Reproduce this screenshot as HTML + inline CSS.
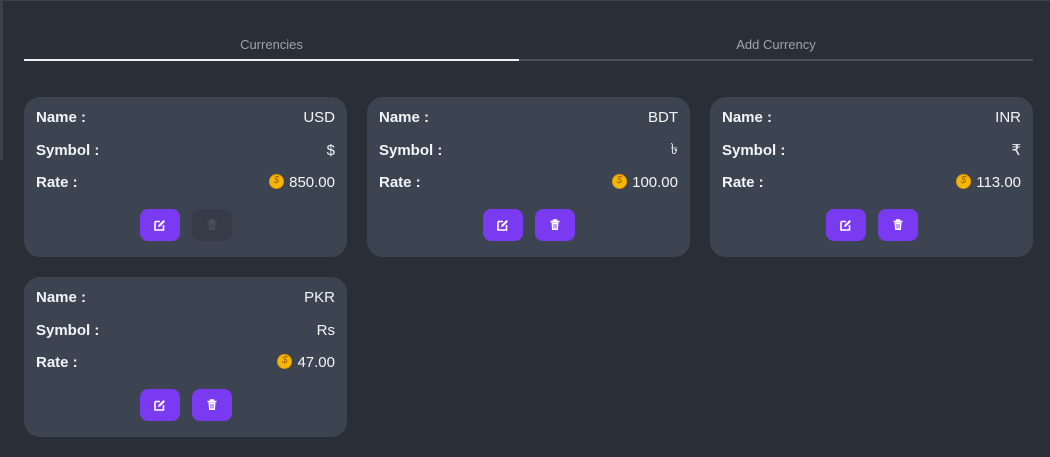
<!DOCTYPE html>
<html><head><style>
*{box-sizing:border-box;margin:0;padding:0}
body{width:1050px;height:457px;background:#2a2e37;font-family:"Liberation Sans",sans-serif;position:relative;overflow:hidden}
.edge{position:absolute;left:0;top:0;width:3px;height:160px;background:#3b404c}
.topedge{position:absolute;left:0;top:0;width:1050px;height:1px;background:#3b404c}
.tab{position:absolute;top:37px;font-size:13px;color:#9ca3af;text-align:center}
.card{position:absolute;width:323px;height:160px;background:#3d4451;border-radius:16px;color:#f2f4f8}
.row{position:absolute;left:12px;right:12px;display:flex;justify-content:space-between;align-items:center;font-size:15px;height:20px}
.row b{font-weight:bold}
.coin{display:inline-block;width:15px;height:15px;border-radius:50%;background:#f5b800;border:1px solid #e69a00;vertical-align:-2px;margin-right:5px;position:relative}
.coin:after{content:"$";position:absolute;left:3.5px;top:0px;font-size:10px;color:#a85d00}
.btn{position:absolute;top:112px;width:40px;height:32px;border-radius:8px;background:#7a3af2;display:flex;align-items:center;justify-content:center}
.btn.dis{background:#363b47}
</style></head><body>
<div class="topedge"></div><div class="edge"></div>
<div class="tab" style="left:24px;width:495px">Currencies</div>
<div class="tab" style="left:519px;width:514px">Add Currency</div>
<div style="position:absolute;left:519px;top:59px;width:514px;height:2px;background:#4b505c"></div>
<div style="position:absolute;left:24px;top:59px;width:495px;height:2px;background:#f2f2f2"></div>

<svg width="0" height="0" style="position:absolute"><defs>
<symbol id="ed" viewBox="0 0 12 12"><path d="M1 2.5h5M1 2.5v8.5h8.5V6" fill="none" stroke="#fff" stroke-width="1.6"/><path d="M4 8l.5-2L9.5 1l1.5 1.5-5 5z" fill="#fff"/></symbol>
<symbol id="tr" viewBox="0 0 12 12"><path d="M1.5 2.5h9M4.5 2.5V1h3v1.5" fill="none" stroke="#fff" stroke-width="1.4"/><path d="M2.5 3.5h7l-.6 7.5H3.1z" fill="#fff"/><path d="M5 5v4.5M7 5v4.5" stroke="#7a3af2" stroke-width="0.9"/></symbol>
<symbol id="trd" viewBox="0 0 12 12"><path d="M1.5 2.5h9M4.5 2.5V1h3v1.5" fill="none" stroke="#4a505c" stroke-width="1.4"/><path d="M2.5 3.5h7l-.6 7.5H3.1z" fill="#4a505c"/><path d="M5 5v4.5M7 5v4.5" stroke="#363b47" stroke-width="0.9"/></symbol>
</defs></svg>

<div class="card" style="left:24px;top:97px">
<div class="row" style="top:10px"><b>Name :</b><span>USD</span></div>
<div class="row" style="top:43px"><b>Symbol :</b><span>$</span></div>
<div class="row" style="top:75px"><b>Rate :</b><span><i class="coin"></i>850.00</span></div>
<div class="btn" style="left:116px"><svg width="12" height="12"><use href="#ed"/></svg></div>
<div class="btn dis" style="left:168px"><svg width="12" height="12"><use href="#trd"/></svg></div>
</div>
<div class="card" style="left:367px;top:97px">
<div class="row" style="top:10px"><b>Name :</b><span>BDT</span></div>
<div class="row" style="top:43px"><b>Symbol :</b><span>৳</span></div>
<div class="row" style="top:75px"><b>Rate :</b><span><i class="coin"></i>100.00</span></div>
<div class="btn" style="left:116px"><svg width="12" height="12"><use href="#ed"/></svg></div>
<div class="btn" style="left:168px"><svg width="12" height="12"><use href="#tr"/></svg></div>
</div>
<div class="card" style="left:710px;top:97px">
<div class="row" style="top:10px"><b>Name :</b><span>INR</span></div>
<div class="row" style="top:43px"><b>Symbol :</b><span>₹</span></div>
<div class="row" style="top:75px"><b>Rate :</b><span><i class="coin"></i>113.00</span></div>
<div class="btn" style="left:116px"><svg width="12" height="12"><use href="#ed"/></svg></div>
<div class="btn" style="left:168px"><svg width="12" height="12"><use href="#tr"/></svg></div>
</div>
<div class="card" style="left:24px;top:277px">
<div class="row" style="top:10px"><b>Name :</b><span>PKR</span></div>
<div class="row" style="top:43px"><b>Symbol :</b><span>Rs</span></div>
<div class="row" style="top:75px"><b>Rate :</b><span><i class="coin"></i>47.00</span></div>
<div class="btn" style="left:116px"><svg width="12" height="12"><use href="#ed"/></svg></div>
<div class="btn" style="left:168px"><svg width="12" height="12"><use href="#tr"/></svg></div>
</div>
</body></html>
